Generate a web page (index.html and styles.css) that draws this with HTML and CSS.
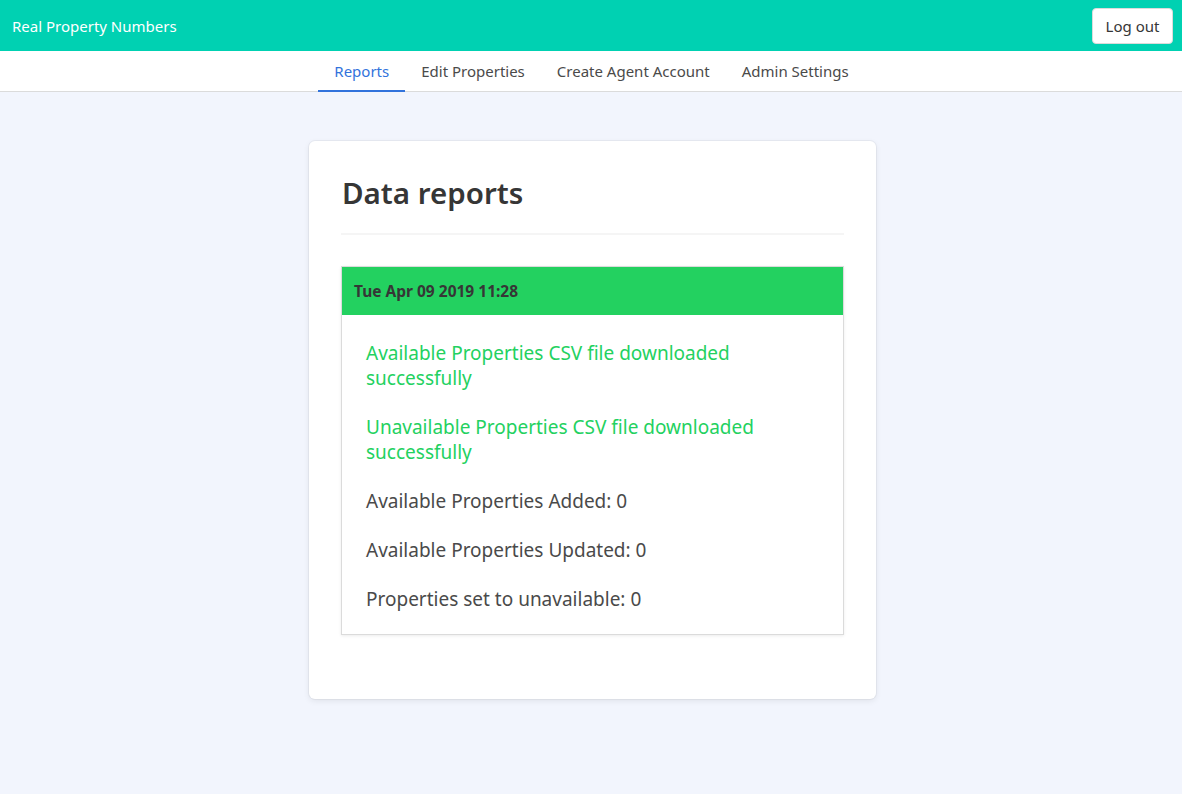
FILE: index.html
```html
<!DOCTYPE html>
<html lang="en">
<head>
<meta charset="utf-8">
<title>Real Property Numbers</title>
<link rel="stylesheet" href="styles.css">
</head>
<body>
<header class="topbar">
  <div class="brand">Real Property Numbers</div>
  <button class="logout">Log out</button>
</header>
<nav class="tabs">
  <a class="tab active">Reports</a>
  <a class="tab">Edit Properties</a>
  <a class="tab">Create Agent Account</a>
  <a class="tab">Admin Settings</a>
</nav>
<main class="main">
  <section class="card">
    <h1 class="title">Data reports</h1>
    <hr class="divider">
    <div class="report">
      <div class="report-head">Tue Apr 09 2019 11:28</div>
      <div class="report-body">
        <p class="line success">Available Properties CSV file downloaded successfully</p>
        <p class="line success">Unavailable Properties CSV file downloaded successfully</p>
        <p class="line">Available Properties Added: 0</p>
        <p class="line">Available Properties Updated: 0</p>
        <p class="line">Properties set to unavailable: 0</p>
      </div>
    </div>
  </section>
</main>
</body>
</html>
```

FILE: styles.css
```css
* { box-sizing: border-box; }
html, body { margin: 0; padding: 0; }
body {
  font-family: "Noto Sans", "Open Sans", sans-serif;
  background: #f2f5fd;
  color: #4a4a4a;
  min-height: 794px;
}
.topbar {
  height: 51px;
  background: #00d1b2;
  display: flex;
  align-items: center;
  justify-content: space-between;
  padding: 0 9px 0 12px;
}
.brand {
  color: #fff;
  font-size: 15px;
}
.logout {
  font-family: inherit;
  font-size: 15px;
  color: #363636;
  background: #fff;
  border: 1px solid #dbdbdb;
  border-radius: 4px;
  height: 36px;
  width: 81px;
  padding: 0;
}
.tabs {
  background: #fff;
  display: flex;
  justify-content: center;
  border-bottom: 1px solid #dbdbdb;
  height: 41px;
  padding-left: 1px;
}
.tab {
  display: flex;
  align-items: center;
  padding: 0 16px;
  font-size: 15px;
  color: #4a4a4a;
  border-bottom: 2px solid transparent;
  margin-bottom: -1px;
}
.tab.active {
  color: #3273dc;
  border-bottom-color: #3273dc;
}
.main {
  display: flex;
  justify-content: center;
  padding-top: 49px;
  padding-left: 3px;
}
.card {
  width: 567px;
  background: #fff;
  border-radius: 6px;
  box-shadow: 0 2px 6px rgba(10,10,10,0.08), 0 0 0 1px rgba(10,10,10,0.04);
  padding: 32px 32px 64px;
}
.title {
  margin: 0;
  font-size: 29.5px;
  font-weight: 600;
  color: #363636;
  line-height: 40px;
  padding-left: 1px;
}
.divider {
  border: none;
  height: 2px;
  background: #f5f5f5;
  margin: 20px 0 31px;
}
.report {
  border: 1px solid #dbdbdb;
  box-shadow: 0 1px 3px rgba(10,10,10,0.08);
}
.report-head {
  background: #23d160;
  height: 48px;
  display: flex;
  align-items: center;
  padding-left: 12px;
  font-size: 15.5px;
  font-weight: 700;
  color: #363636;
}
.report-body {
  padding: 26px 24px 22px;
}
.line {
  margin: 0 0 24px;
  font-size: 19px;
  line-height: 25px;
  padding-right: 50px;
}
.line:last-child { margin-bottom: 0; }
.line.success { color: #23d160; }
```
